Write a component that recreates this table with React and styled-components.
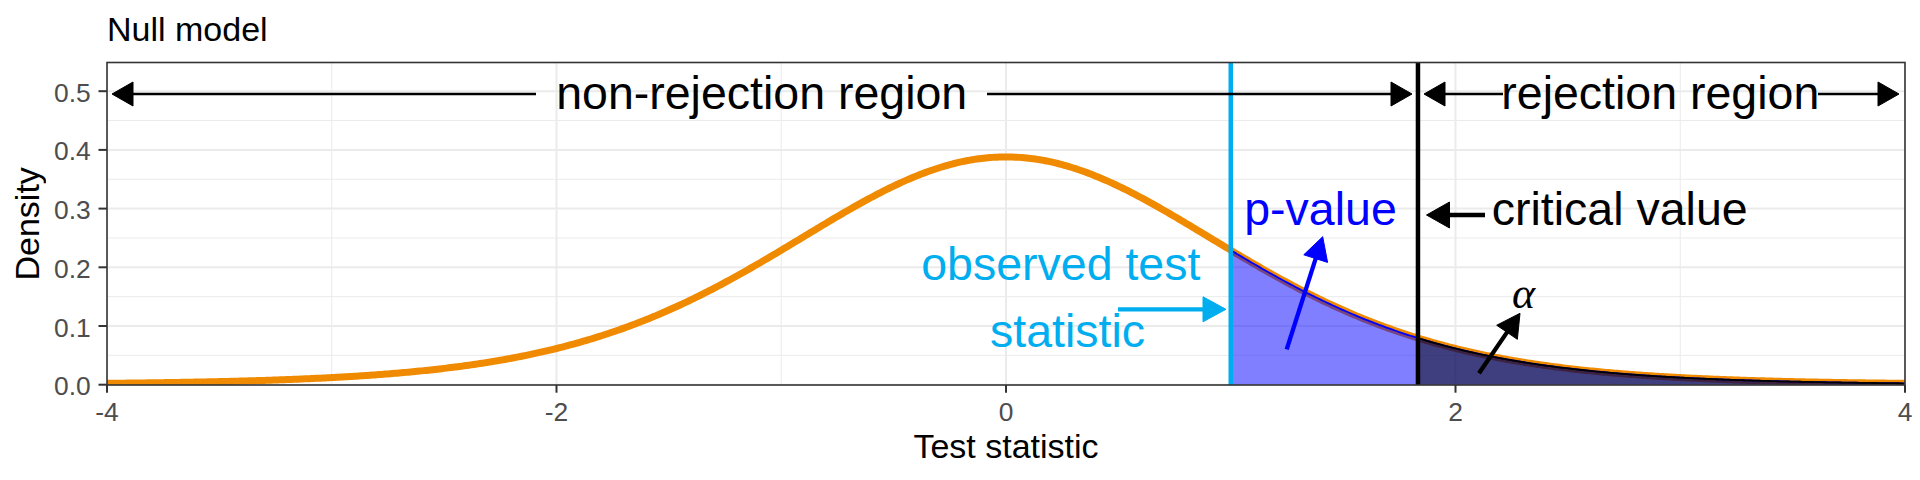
import React from 'react';
import styled, { createGlobalStyle } from 'styled-components';

const GlobalStyle = createGlobalStyle`
  html, body { margin: 0; padding: 0; background: #ffffff; }
  body { font-family: "Liberation Sans", Arial, sans-serif; }
`;

const Figure = styled.div`
  width: 1920px;
  height: 480px;
  display: grid;
  grid-template-columns: 50px 1870px;
  grid-template-rows: 56px 374px 50px;
  background: #ffffff;
  overflow: hidden;
  font-family: "Liberation Sans", Arial, sans-serif;
`;

const Title = styled.div`
  grid-column: 2;
  grid-row: 1;
  box-sizing: border-box;
  padding: 12.3px 0 0 57px;
  font-size: 34px;
  line-height: 34px;
  color: #000000;
  white-space: nowrap;
`;

const YTitle = styled.div`
  grid-column: 1;
  grid-row: 2;
  align-self: start;
  justify-self: start;
  margin-top: 6.5px;
  margin-left: 10px;
  width: 34px;
  height: 322.5px;
  writing-mode: vertical-rl;
  transform: rotate(180deg);
  text-align: center;
  font-size: 34px;
  line-height: 34px;
  color: #000000;
  white-space: nowrap;
`;

const XTitle = styled.div`
  grid-column: 2;
  grid-row: 3;
  margin-left: 57px;
  margin-top: -1px;
  width: 1798px;
  text-align: center;
  font-size: 34px;
  line-height: 34px;
  color: #000000;
  white-space: nowrap;
`;

const Chart = styled.svg`
  grid-column: 2;
  grid-row: 2;
  display: block;
  overflow: visible;
`;

const TickLabel = styled.text`
  font-family: "Liberation Sans", Arial, sans-serif;
  font-size: 26.4px;
  fill: #4d4d4d;
`;

const Note = styled.text`
  font-family: ${(p) => (p.$serif ? '"Liberation Serif", "Times New Roman", serif' : '"Liberation Sans", Arial, sans-serif')};
  font-style: ${(p) => (p.$serif ? 'italic' : 'normal')};
  font-size: ${(p) => p.$size || 46.5}px;
  fill: ${(p) => p.$color || '#000000'};
`;

const GridLine = styled.line`
  stroke: #ebebeb;
  stroke-width: ${(p) => (p.$major ? 2 : 1)}px;
`;

const Tick = styled.line`
  stroke: #333333;
  stroke-width: 2px;
`;

// scales
const L = 107;
const R = 1905;
const T = 62.5;
const B = 385;
const X = (t) => L + (t + 4) * ((R - L) / 8);
const Y = (v) => 384.7 - 587 * v;

const G45 = 11.631728;
const C = 24 / (Math.sqrt(9 * Math.PI) * G45);
const dt = (t) => C * Math.pow(1 + (t * t) / 9, -5);

const CRIT = 1.833;
const OBS = 1;

const ORANGE = '#f08a00';
const CYAN = '#00aeef';
const BLUE = '#0000ff';

function curvePts(a, b, step = 0.01) {
  const pts = [];
  for (let t = a; t <= b + 1e-9; t += step) pts.push([X(t), Y(dt(t))]);
  return pts;
}

function linePath(pts) {
  return pts.map((p, i) => `${i ? 'L' : 'M'}${p[0].toFixed(2)},${p[1].toFixed(2)}`).join(' ');
}

function areaPath(a, b) {
  const pts = curvePts(a, b);
  return `M${X(a)},${Y(0)} ` + pts.map((p) => `L${p[0].toFixed(2)},${p[1].toFixed(2)}`).join(' ') + ` L${X(b)},${Y(0)} Z`;
}

function Arrow({ x1, y1, x2, y2, color = '#000', width = 2.4, head = 21, half = 12 }) {
  const dx = x2 - x1;
  const dy = y2 - y1;
  const len = Math.hypot(dx, dy);
  const ux = dx / len;
  const uy = dy / len;
  const bx = x2 - ux * head;
  const by = y2 - uy * head;
  const px = -uy;
  const py = ux;
  const pts = `${x2},${y2} ${bx + px * half},${by + py * half} ${bx - px * half},${by - py * half}`;
  return (
    <g>
      <line x1={x1} y1={y1} x2={bx + ux * 2} y2={by + uy * 2} stroke={color} strokeWidth={width} />
      <polygon points={pts} fill={color} stroke={color} strokeWidth={1} />
    </g>
  );
}

const yMajor = [0, 0.1, 0.2, 0.3, 0.4, 0.5];
const yMinor = [0.05, 0.15, 0.25, 0.35, 0.45];
const xMajor = [-4, -2, 0, 2, 4];
const xMinor = [-3, -1, 1, 3];

export default function App() {
  const full = curvePts(-4, 4);
  const pUpper = curvePts(OBS, 4);
  const aUpper = curvePts(CRIT, 4);
  return (
    <>
      <GlobalStyle />
      <Figure>
        <Title>Null model</Title>
        <YTitle>Density</YTitle>
        <Chart width="1870" height="374" viewBox="50 56 1870 374">
          <defs>
            <clipPath id="panel">
              <rect x={L} y={T} width={R - L} height={B - T} />
            </clipPath>
          </defs>
          <rect x={L} y={T} width={R - L} height={B - T} fill="#ffffff" />
          <g clipPath="url(#panel)">
            {yMinor.map((v) => (
              <GridLine key={'ym' + v} x1={L} x2={R} y1={Y(v)} y2={Y(v)} />
            ))}
            {xMinor.map((t) => (
              <GridLine key={'xm' + t} x1={X(t)} x2={X(t)} y1={T} y2={B} />
            ))}
            {yMajor.map((v) => (
              <GridLine key={'yM' + v} $major x1={L} x2={R} y1={Y(v)} y2={Y(v)} />
            ))}
            {xMajor.map((t) => (
              <GridLine key={'xM' + t} $major x1={X(t)} x2={X(t)} y1={T} y2={B} />
            ))}

            <path d={linePath(full)} fill="none" stroke={ORANGE} strokeWidth={7} strokeLinejoin="round" />
            <path d={areaPath(OBS, 4)} fill="rgba(0,0,255,0.5)" />
            <path d={linePath(pUpper)} fill="none" stroke={BLUE} strokeWidth={1.8} />
            <path d={areaPath(CRIT, 4)} fill="rgba(0,0,0,0.5)" />
            <path d={linePath(aUpper)} fill="none" stroke="#000000" strokeWidth={1.8} />

            <line x1={X(OBS)} x2={X(OBS)} y1={T} y2={B} stroke={CYAN} strokeWidth={4.5} />
            <line x1={X(CRIT)} x2={X(CRIT)} y1={T} y2={B} stroke="#000000" strokeWidth={4.5} />

            <Arrow x1={536} y1={94} x2={112} y2={94} />
            <Arrow x1={987} y1={94} x2={1412} y2={94} />
            <Arrow x1={1503} y1={94} x2={1424} y2={94} />
            <Arrow x1={1818} y1={94} x2={1899} y2={94} />

            <Arrow x1={1485} y1={215} x2={1426.5} y2={215} width={4.3} head={23} half={13} />
            <Arrow x1={1118} y1={309.3} x2={1226} y2={309.3} color={CYAN} width={4.3} head={23} half={12.5} />
            <Arrow x1={1286.7} y1={349.3} x2={1322.7} y2={236.7} color={BLUE} width={4.3} head={23} half={12.5} />
            <Arrow x1={1479} y1={373.3} x2={1520} y2={313.3} width={4.3} head={23} half={12.5} />

            <Note x={761.7} y={109.3} textAnchor="middle">non-rejection region</Note>
            <Note x={1660.3} y={109.3} textAnchor="middle">rejection region</Note>
            <Note x={1619.7} y={225} textAnchor="middle">critical value</Note>
            <Note x={1320.5} y={225} textAnchor="middle" $color={BLUE}>p-value</Note>
            <Note x={1060.8} y={280} textAnchor="middle" $color={CYAN}>observed test</Note>
            <Note x={1067.5} y={346.7} textAnchor="middle" $color={CYAN}>statistic</Note>
            <Note x={1523.5} y={307.7} textAnchor="middle" $serif $size={44}>α</Note>
          </g>

          {yMajor.map((v) => (
            <Tick key={'yt' + v} x1={98.5} x2={L} y1={Y(v)} y2={Y(v)} />
          ))}
          {xMajor.map((t) => (
            <Tick key={'xt' + t} x1={X(t)} x2={X(t)} y1={B} y2={392.7} />
          ))}
          {yMajor.map((v) => (
            <TickLabel key={'yl' + v} x={90.7} y={Y(v) + 10.5} textAnchor="end">
              {v.toFixed(1)}
            </TickLabel>
          ))}
          {xMajor.map((t) => (
            <TickLabel key={'xl' + t} x={X(t)} y={421} textAnchor="middle">
              {t}
            </TickLabel>
          ))}
          <rect x={L} y={T} width={R - L} height={B - T} fill="none" stroke="#333333" strokeWidth={1.6} />
        </Chart>
        <XTitle>Test statistic</XTitle>
      </Figure>
    </>
  );
}
